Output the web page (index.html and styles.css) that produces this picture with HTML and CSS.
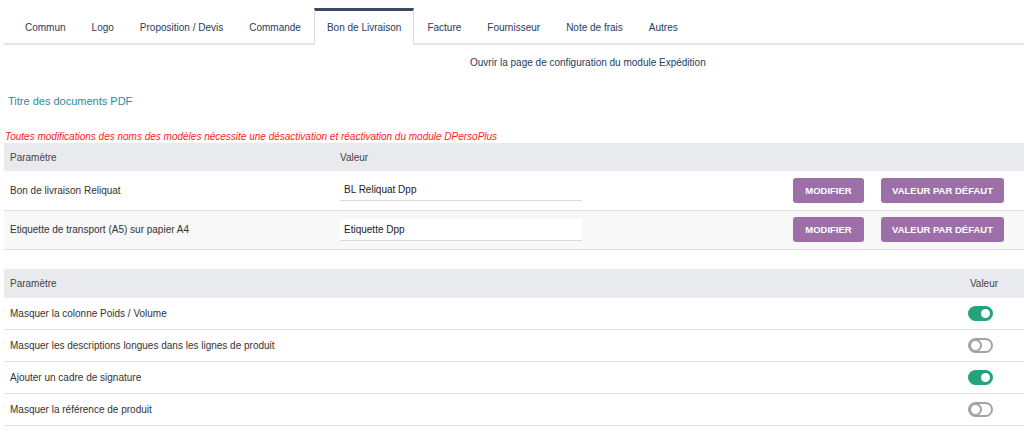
FILE: index.html
```html
<!DOCTYPE html>
<html lang="fr">
<head>
  <meta charset="UTF-8" />
  <title>Bon de Livraison</title>
  <link rel="stylesheet" href="styles.css">
</head>
<body>
  <div class="page">

    <!-- onglets -->
    <ul class="tabs">
      <li>Commun</li>
      <li>Logo</li>
      <li>Proposition / Devis</li>
      <li>Commande</li>
      <li class="active">Bon de Livraison</li>
      <li>Facture</li>
      <li>Fournisseur</li>
      <li>Note de frais</li>
      <li>Autres</li>
    </ul>

    <div class="config-link"><a href="#">Ouvrir la page de configuration du module Expédition</a></div>

    <h2 class="title">Titre des documents PDF</h2>

    <p class="warning">Toutes modifications des noms des modèles nécessite une désactivation et réactivation du module DPersoPlus</p>

    <!-- titres des modeles -->
    <table class="grid names">
      <tr class="head">
        <td class="c-param">Paramètre</td>
        <td>Valeur</td>
        <td></td>
      </tr>
      <tr>
        <td class="c-param">Bon de livraison Reliquat</td>
        <td><input class="field" type="text" value="BL Reliquat Dpp" /></td>
        <td class="actions"><button class="b-mod">Modifier</button><button class="b-def">Valeur par défaut</button></td>
      </tr>
      <tr class="alt">
        <td class="c-param">Etiquette de transport (A5) sur papier A4</td>
        <td><input class="field" type="text" value="Etiquette Dpp" /></td>
        <td class="actions"><button class="b-mod">Modifier</button><button class="b-def">Valeur par défaut</button></td>
      </tr>
    </table>

    <!-- options -->
    <table class="grid options">
      <tr class="head">
        <td class="c-param">Paramètre</td>
        <td class="c-val">Valeur</td>
      </tr>
      <tr>
        <td class="c-param">Masquer la colonne Poids / Volume</td>
        <td class="c-val"><span class="toggle on"></span></td>
      </tr>
      <tr>
        <td class="c-param">Masquer les descriptions longues dans les lignes de produit</td>
        <td class="c-val"><span class="toggle"></span></td>
      </tr>
      <tr>
        <td class="c-param">Ajouter un cadre de signature</td>
        <td class="c-val"><span class="toggle on"></span></td>
      </tr>
      <tr>
        <td class="c-param">Masquer la référence de produit</td>
        <td class="c-val"><span class="toggle"></span></td>
      </tr>
    </table>

  </div>
</body>
</html>
```

FILE: styles.css
```css
* {
  margin: 0;
  padding: 0;
  box-sizing: border-box;
}

body {
  font-family: "Liberation Sans", Arial, sans-serif;
  font-size: 10px;
  color: #333;
  background: #fff;
}

.page {
  padding-left: 4px;
  padding-top: 8px;
}

.tabs {
  list-style: none;
  display: flex;
  border-bottom: 2px solid #e4e4e4;
  padding-left: 8px;
}

.tabs li {
  padding: 0 12px;
  height: 35px;
  line-height: 33px;
  font-size: 10px;
  color: #263c5c;
  border: 1px solid transparent;
  border-top: 3px solid transparent;
  border-bottom: none;
  margin-bottom: -2px;
}

.tabs li.active {
  background: #fff;
  border-color: #dcdcdc;
  border-top-color: #3b4a60;
  border-bottom: 2px solid #fff;
  height: 37px;
}

.config-link {
  padding: 12px 0 0 466px;
  height: 35px;
}

.config-link a {
  color: #263c5c;
  text-decoration: none;
  font-size: 10px;
}

.title {
  font-weight: normal;
  font-size: 11px;
  color: #2d8c9a;
  padding: 15px 0 0 4px;
  height: 51px;
}

.warning {
  color: #ff1a1a;
  font-style: italic;
  font-size: 10px;
  padding-left: 1px;
  height: 12px;
  line-height: 12px;
}

.grid {
  width: 100%;
  border-collapse: collapse;
}

.grid td {
  border-bottom: 1px solid #e0e0e0;
  vertical-align: middle;
}

.grid .head td {
  background: #e9eaed;
  color: #444;
  height: 28px;
  border-bottom: none;
}

.grid .c-param {
  padding-left: 6px;
}

.names td {
  height: 39px;
}

.names td.c-param {
  width: 336px;
}

.names tr.alt td {
  background: #f8f8f8;
}

.names td:nth-child(2) {
  width: 420px;
}

.field {
  width: 242px;
  height: 22px;
  border: none;
  border-bottom: 1px solid #dadada;
  background: #fff;
  font-family: inherit;
  font-size: 10px;
  color: #222;
  padding-left: 4px;
  outline: none;
}

.actions {
  text-align: right;
  padding-right: 20px;
}

.actions button {
  background: #9c6fa8;
  color: #fff;
  border: none;
  border-radius: 3px;
  height: 25px;
  padding: 0;
  font: bold 9.5px "Liberation Sans", Arial, sans-serif;
  text-transform: uppercase;
  margin-left: 17px;
}

.actions .b-mod {
  width: 71px;
}

.actions .b-def {
  width: 123px;
}

.options {
  margin-top: 19px;
}

.options .head td {
  height: 29px;
}

.options td {
  height: 32px;
}

.options .c-val {
  width: 80px;
  text-align: center;
  padding-right: 8px;
}

.options .head .c-val {
  padding-right: 0;
}

.toggle {
  display: inline-block;
  width: 25px;
  height: 15px;
  border-radius: 8px;
  border: 2px solid #a3a3a3;
  position: relative;
  vertical-align: middle;
}

.toggle::after {
  content: "";
  position: absolute;
  left: -1px;
  top: -1px;
  width: 13px;
  height: 13px;
  border-radius: 50%;
  border: 2px solid #a3a3a3;
  box-sizing: border-box;
  background: #fff;
}

.toggle.on {
  background: #25a17b;
  border-color: #25a17b;
}

.toggle.on::after {
  left: auto;
  right: 1px;
  top: 1px;
  width: 9px;
  height: 9px;
  border: none;
}
```
